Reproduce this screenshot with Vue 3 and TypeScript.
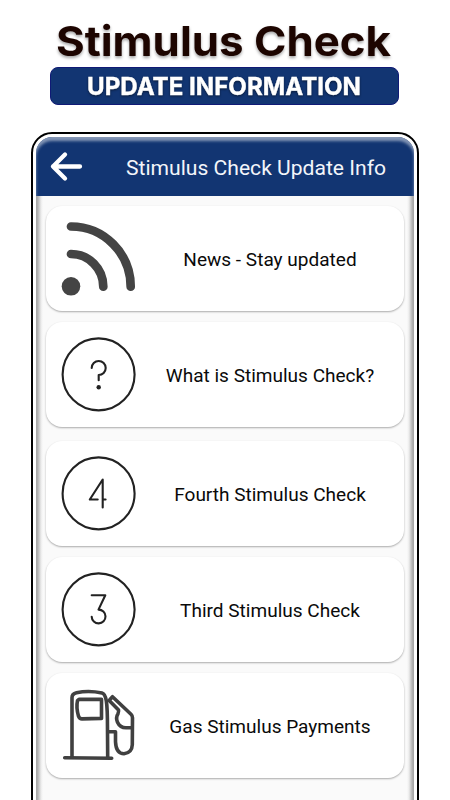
<script setup lang="ts">
type IconName = 'news' | 'question' | 'four' | 'three' | 'gas'

interface MenuItem {
  label: string
  icon: IconName
}

const items: MenuItem[] = [
  { label: 'News - Stay updated', icon: 'news' },
  { label: 'What is Stimulus Check?', icon: 'question' },
  { label: 'Fourth Stimulus Check', icon: 'four' },
  { label: 'Third Stimulus Check', icon: 'three' },
  { label: 'Gas Stimulus Payments', icon: 'gas' },
]
</script>

<template>
  <main class="page">
    <svg class="title" viewBox="0 0 450 67" role="heading">
      <text x="56" y="56" textLength="335" lengthAdjust="spacingAndGlyphs">Stimulus Check</text>
    </svg>
    <div class="banner">
      <svg class="banner-text" viewBox="0 0 348 37">
        <text x="36" y="26.500" textLength="274" lengthAdjust="spacingAndGlyphs">UPDATE INFORMATION</text>
      </svg>
    </div>
    <section class="phone">
      <div class="screen">
        <header class="bar">
          <svg class="back" viewBox="0 0 36 32">
            <path d="M31 15.500H4M16 3.500L4 15.500L16 27.500" />
          </svg>
          <h1>Stimulus Check Update Info</h1>
        </header>
        <div class="list">
          <article v-for="item in items" :key="item.icon" class="card" :class="item.icon">
            <svg class="icon" viewBox="0 0 90 106">
              <template v-if="item.icon === 'news'">
                <circle class="dot" cx="25" cy="80.300" r="9.300" />
                <path class="wave" d="M25 48A32.400 32.700 0 0 1 57.300 80.700M25 20.500A59.700 60.200 0 0 1 84.700 80.700" />
              </template>
              <g v-else-if="item.icon === 'gas'" class="pump" transform="translate(0 -5.300)">
                <path d="M18.700 90L65.700 90.500M26 89.500V30Q26 26 30.500 25Q43 22.500 56 25.300Q59 26 60.300 33Q61.500 40 61.500 62L61.700 89.500" />
                <path d="M33 31.700H55.500V50.700L36 51.200Q33.500 51.200 32.500 48.500Q30 40 31.500 33Z" />
                <path d="M62.500 64H69.500V74Q70 86 78 86Q86 85 86.300 77L86.500 50Q86.500 48 85 46.500L66.500 29L63.200 32.700L72.500 42.300Q73 43.500 72 46Q69.500 50 71.500 54.500Q74 60 80 60H86" />
              </g>
              <g v-else class="ring">
                <circle cx="52.600" cy="52.400" r="36" />
                <template v-if="item.icon === 'question'">
                  <path d="M45.700 46A7 7 0 1 1 52.700 53V58.300" />
                  <circle class="point" cx="52.700" cy="65.300" r="2.200" />
                </template>
                <path v-else-if="item.icon === 'four'" d="M56.700 66.500V38.500L43.800 58.500H51.700M56.700 58.500H59.600" />
                <path v-else d="M45.700 38.300H59.300L52.500 52.600A6.900 6.900 0 1 1 45.700 59.700" />
              </g>
            </svg>
            <span class="label">{{ item.label }}</span>
          </article>
        </div>
      </div>
    </section>
  </main>
</template>

<style>
body {
  margin: 0;
  background: #fff;
}
</style>

<style scoped>
.page {
  width: 450px;
  height: 800px;
  overflow: hidden;
  display: flex;
  flex-direction: column;
  align-items: center;
  background: #fff;
  font-family: Roboto, sans-serif;
}
.title {
  width: 450px;
  height: 67px;
  flex: none;
}
.title text {
  font: 700 41px Inter, sans-serif;
  fill: #1d0500;
  filter: drop-shadow(0 2px 1.500px rgba(0, 0, 0, 0.35));
}
.banner {
  box-sizing: border-box;
  width: 349px;
  height: 38px;
  flex: none;
  margin-right: 1px;
  border: 1px solid #101a76;
  border-radius: 8px;
  background: #123572;
}
.banner-text {
  display: block;
  width: 348px;
  height: 37px;
}
.banner-text text {
  font: 700 24.500px Inter, sans-serif;
  fill: #fff;
  stroke: #fff;
  stroke-width: 0.400;
  filter: drop-shadow(0 1px 1px rgba(0, 0, 0, 0.5));
}
.phone {
  box-sizing: border-box;
  width: 388px;
  height: 700px;
  flex: none;
  margin-top: 27px;
  padding: 3px;
  border: 2px solid #000;
  border-radius: 21px;
  background: #fff;
}
.screen {
  position: relative;
  height: 690px;
  overflow: hidden;
  border-radius: 16px;
  background: #fafafa;
}
.screen::after {
  content: '';
  position: absolute;
  inset: 0;
  border-radius: 16px;
  box-shadow: inset 0 4px 3px rgba(255, 255, 255, 0.48);
  pointer-events: none;
}
.bar {
  display: flex;
  align-items: center;
  height: 59px;
  background: #123572;
}
.back {
  width: 36px;
  height: 32px;
  margin-left: 13px;
  margin-top: 1px;
}
.back path {
  fill: none;
  stroke: #fff;
  stroke-width: 4.300;
  stroke-linecap: round;
  stroke-linejoin: round;
}
.bar h1 {
  margin: 3px 0 0 41px;
  font-size: 21.100px;
  font-weight: 400;
  line-height: 28px;
  white-space: nowrap;
  color: #f3f5fa;
}
.list {
  display: flex;
  flex-direction: column;
  gap: 11px;
  height: 631px;
  box-sizing: border-box;
  padding: 10px 10px 0;
  background: linear-gradient(90deg, #8c8c8c, #b4b4b4 2px, #ececec 5px, #fafafa 7px, #fafafa calc(100% - 7px), #ececec calc(100% - 5px), #b4b4b4 calc(100% - 2px), #8c8c8c);
}
.card {
  display: grid;
  grid-template-columns: 90px 1fr;
  align-items: center;
  height: 105px;
  flex: none;
  border-radius: 16px;
  background: #fff;
  box-shadow: 0 1px 2px rgba(0, 0, 0, 0.32);
}
.card.question {
  margin-bottom: 3px;
}
.icon {
  width: 90px;
  height: 106px;
  align-self: start;
  fill: none;
  stroke-linecap: round;
  stroke-linejoin: round;
}
.dot {
  fill: #444;
}
.wave {
  stroke: #444;
  stroke-width: 8.700;
}
.ring {
  stroke: #222;
  stroke-width: 2.100;
}
.point {
  fill: #222;
  stroke: none;
}
.pump {
  stroke: #404040;
  stroke-width: 3.600;
}
.label {
  padding-top: 1px;
  text-align: center;
  font-size: 19.050px;
  line-height: 24px;
  white-space: nowrap;
  color: #0a0a0a;
}
</style>
